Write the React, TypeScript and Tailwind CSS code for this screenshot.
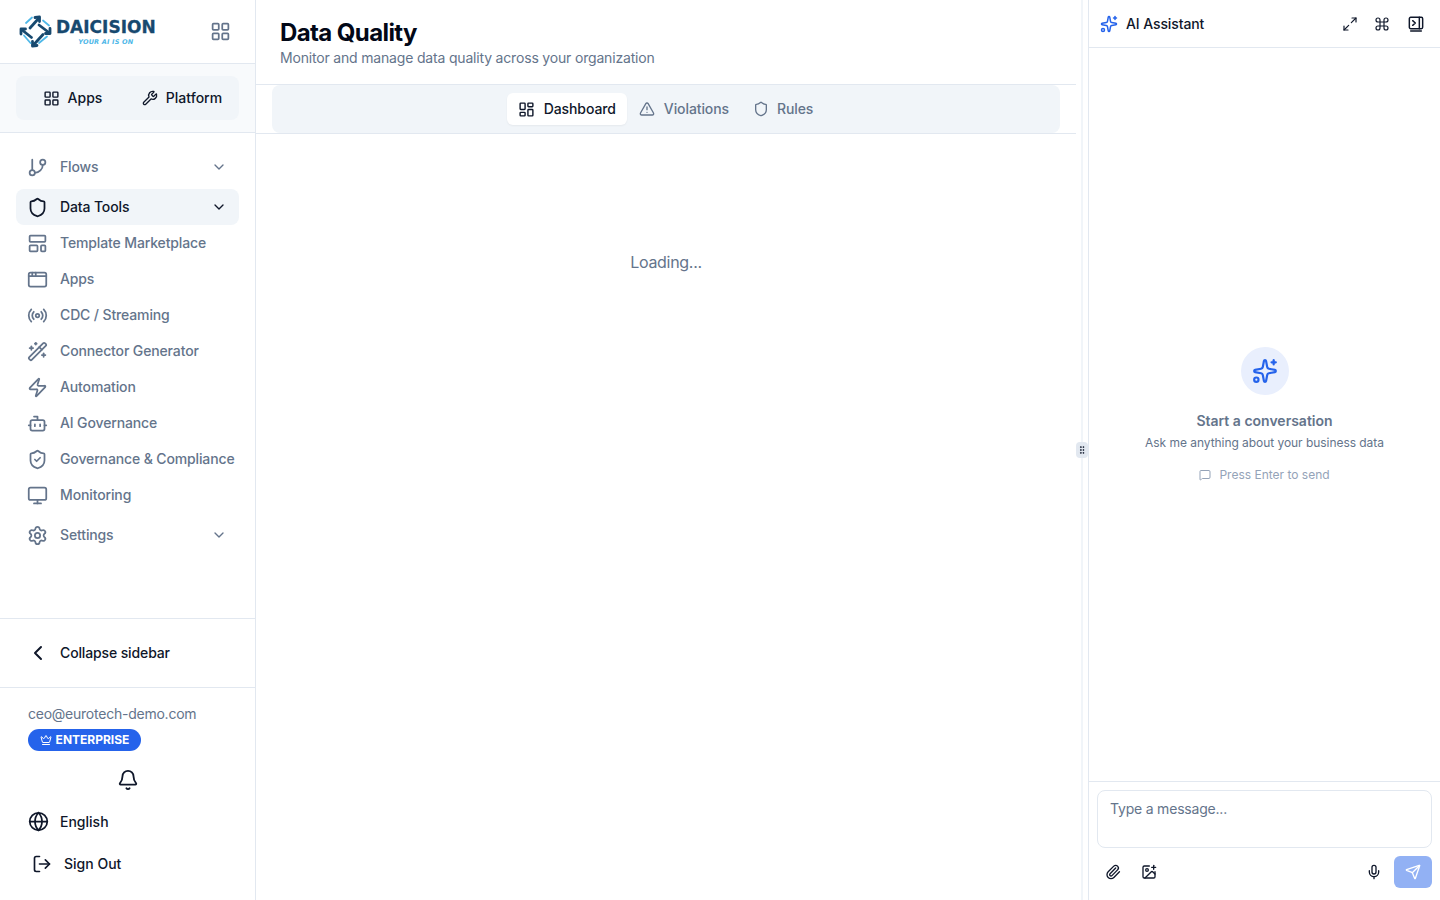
import React from 'react';
import {
  AppWindow,
  Bell,
  Bot,
  ChevronDown,
  ChevronLeft,
  Command,
  Crown,
  GitBranch,
  Globe,
  GripVertical,
  ImagePlus,
  LayoutDashboard,
  LayoutGrid,
  LayoutTemplate,
  LogOut,
  Maximize2,
  MessageSquare,
  Mic,
  Monitor,
  Paperclip,
  Radio,
  Send,
  Settings,
  Shield,
  ShieldCheck,
  Sparkles,
  TriangleAlert,
  WandSparkles,
  Wrench,
  Zap,
} from 'lucide-react';

const navLinks = [
  { label: 'Template Marketplace', icon: LayoutTemplate },
  { label: 'Apps', icon: AppWindow },
  { label: 'CDC / Streaming', icon: Radio },
  { label: 'Connector Generator', icon: WandSparkles },
  { label: 'Automation', icon: Zap },
  { label: 'AI Governance', icon: Bot },
  { label: 'Governance & Compliance', icon: ShieldCheck },
  { label: 'Monitoring', icon: Monitor },
];

// drawn by hand, no package has this mark
const LogoMark = () => (
  <svg width="33" height="33" viewBox="0 0 33 33" fill="none" className="shrink-0">
    <g stroke="#17496f" strokeWidth="2.8" strokeLinecap="round" strokeLinejoin="round">
      <path d="M11 13 L20 3" />
      <path d="M16 2.5 L20.5 2 L20.5 6.5" />
      <path d="M20 10 L30.5 18" />
      <path d="M31 13.5 L31 18.5 L26.5 18.5" />
      <path d="M24 19.5 L14 30.5" />
      <path d="M18 30.5 L13.5 31 L13.5 26.5" />
      <path d="M12.5 22.5 L2.5 14.5" />
      <path d="M2 19 L2 14 L6.5 14" />
    </g>
    <g stroke="#4fb8e8" strokeWidth="1.8" strokeLinecap="round">
      <path d="M7 8 L13 2.5" />
      <path d="M24 5.5 L30 10.5" />
      <path d="M20 28 L28 21.5" />
      <path d="M5 20.5 L11.5 28" />
    </g>
  </svg>
);

// no lucide icon has this shape, panel with a prompt chevron and a base line
const ConsolePanelIcon = () => (
  <svg width="16" height="16" viewBox="0 0 24 24" fill="none" stroke="currentColor" strokeWidth="2.2" strokeLinecap="round" strokeLinejoin="round">
    <rect x="2" y="2" width="20" height="17" rx="2" />
    <path d="M17 2v17" />
    <path d="M7 7l4 3.5L7 14" />
    <path d="M4 22.5h16" />
  </svg>
);

const App: React.FC = () => {
  return (
    <div className="flex h-screen w-full overflow-hidden bg-white font-['Inter',sans-serif] text-[#0f172a]">
      {/* Sidebar */}
      <aside className="flex h-full w-[256px] shrink-0 flex-col border-r border-[#e2e8f0]">
        <div className="flex h-[63px] shrink-0 items-center justify-between pr-[24px] pl-[19px]">
          <div className="flex items-center gap-[4px]">
            <LogoMark />
            <div className="flex flex-col items-center pt-[3px]">
              <span className="font-['DejaVu_Sans',sans-serif] text-[17px] leading-[17px] font-bold text-[#17496f] [-webkit-text-stroke:0.3px_#17496f]">
                DAICISION
              </span>
              <span className="mt-[2px] font-['DejaVu_Sans',sans-serif] text-[6.5px] leading-[9px] font-bold tracking-[0.2px] text-[#4fb8e8] italic">
                YOUR AI IS ON
              </span>
            </div>
          </div>
          <LayoutGrid className="h-[21px] w-[21px] text-[#64748b]" />
        </div>

        <div className="h-[70px] shrink-0 border-y border-[#e2e8f0] bg-[#f8fafc] px-4 pt-[12px]">
          <div className="flex h-[44px] items-center rounded-lg bg-[#f1f5f9] text-sm font-medium">
            <div className="flex w-[113px] items-center justify-center gap-2">
              <LayoutGrid className="h-[17px] w-[17px]" />
              Apps
            </div>
            <div className="flex flex-1 items-center justify-center gap-2 pr-[4px]">
              <Wrench className="h-4 w-4" />
              Platform
            </div>
          </div>
        </div>

        <nav className="flex flex-1 flex-col px-4 pt-4 text-sm font-medium tracking-[-0.13px] text-[#64748b]">
          <div className="flex h-9 shrink-0 items-center justify-between pr-3 pl-[11px]">
            <div className="flex items-center gap-[12px]">
              <GitBranch className="h-[21px] w-[21px]" />
              Flows
            </div>
            <ChevronDown className="h-4 w-4" />
          </div>
          <div className="mt-1 flex h-9 shrink-0 items-center justify-between rounded-lg bg-[#f1f5f9] pr-3 pl-[11px] text-[#0f172a]">
            <div className="flex items-center gap-[12px]">
              <Shield className="h-[21px] w-[21px]" />
              Data Tools
            </div>
            <ChevronDown className="h-4 w-4" />
          </div>
          {navLinks.map((item) => (
            <div key={item.label} className="flex h-9 shrink-0 items-center gap-[12px] pl-[11px] whitespace-nowrap">
              <item.icon className="h-[21px] w-[21px] shrink-0" />
              {item.label}
            </div>
          ))}
          <div className="mt-1 flex h-9 shrink-0 items-center justify-between pr-3 pl-[11px]">
            <div className="flex items-center gap-[12px]">
              <Settings className="h-[21px] w-[21px]" />
              Settings
            </div>
            <ChevronDown className="h-4 w-4" />
          </div>
        </nav>

        <div className="flex h-[70px] shrink-0 items-center gap-[10px] border-y border-[#e2e8f0] pl-[26px] text-sm font-medium tracking-[-0.13px]">
          <ChevronLeft className="h-6 w-6" />
          Collapse sidebar
        </div>

        <div className="h-[212px] shrink-0 px-7 pt-4">
          <p className="text-sm leading-5 tracking-[-0.24px] text-[#64748b]">ceo@eurotech-demo.com</p>
          <div className="mt-[5px] flex h-[22px] w-[113px] items-center justify-center gap-1 rounded-full bg-[#2563eb] text-xs font-bold text-white">
            <Crown className="h-3 w-3" />
            ENTERPRISE
          </div>
          <div className="mt-[18px] flex justify-center">
            <Bell className="h-[22px] w-[22px]" />
          </div>
          <div className="mt-[20px] flex items-center gap-[11px] text-sm font-medium">
            <Globe className="h-[21px] w-[21px]" />
            English
          </div>
          <div className="mt-[22px] flex items-center gap-3 pl-1 text-sm font-medium">
            <LogOut className="h-5 w-5" />
            Sign Out
          </div>
        </div>
      </aside>

      {/* Main */}
      <main className="flex h-full w-[820px] shrink-0 flex-col">
        <header className="h-[85px] shrink-0 border-b border-[#e2e8f0] px-6 pt-[17px]">
          <h1 className="text-2xl leading-8 font-bold tracking-tight text-[#020817]">Data Quality</h1>
          <p className="-mt-[1px] text-sm leading-5 tracking-[-0.18px] text-[#64748b]">Monitor and manage data quality across your organization</p>
        </header>
        <div className="h-[49px] shrink-0 border-b border-[#e2e8f0] px-4">
          <div className="flex h-[48px] items-center justify-center rounded-lg bg-[#f1f5f9] text-sm font-medium tracking-[-0.1px] text-[#64748b]">
            <div className="flex h-8 items-center gap-[9px] rounded-md bg-white px-[11px] text-[#0f172a] shadow-xs">
              <LayoutDashboard className="h-[17px] w-[17px]" />
              Dashboard
            </div>
            <div className="flex h-8 items-center gap-[9px] px-3">
              <TriangleAlert className="h-4 w-4" />
              Violations
            </div>
            <div className="flex h-8 items-center gap-2 px-3">
              <Shield className="h-4 w-4" />
              Rules
            </div>
          </div>
        </div>
        <div className="flex flex-1 justify-center pt-[116px]">
          <p className="text-base leading-6 tracking-[-0.3px] text-[#64748b]">Loading...</p>
        </div>
      </main>

      {/* Resize handle */}
      <div className="relative flex h-full w-[12px] shrink-0 justify-center">
        <div className="h-full w-[2px] bg-[#f1f5f9]" />
        <div className="absolute top-[442px] left-[0px] flex h-4 w-3 items-center justify-center rounded-sm bg-[#e2e8f0]">
          <GripVertical className="h-2.5 w-2.5" />
        </div>
      </div>

      {/* Chat panel */}
      <section className="flex h-full w-[352px] shrink-0 flex-col border-l border-[#e2e8f0]">
        <div className="flex h-[48px] shrink-0 items-center justify-between border-b border-[#e2e8f0] pr-[16px] pl-[11px]">
          <div className="flex items-center gap-2 text-sm font-medium tracking-[-0.1px]">
            <Sparkles className="h-[18px] w-[18px] text-[#2563eb]" />
            AI Assistant
          </div>
          <div className="flex items-center gap-[18px]">
            <div className="flex items-center gap-4">
              <Maximize2 className="h-4 w-4" strokeWidth={1.75} />
              <Command className="h-4 w-4" strokeWidth={1.75} />
            </div>
            <ConsolePanelIcon />
          </div>
        </div>
        <div className="flex flex-1 flex-col items-center justify-center">
          <div className="flex h-12 w-12 items-center justify-center rounded-full bg-[#e9effd]">
            <Sparkles className="h-[26px] w-[26px] text-[#2563eb]" />
          </div>
          <p className="mt-4 text-sm leading-5 font-semibold text-[#64748b]">Start a conversation</p>
          <p className="mt-[2px] text-xs leading-5 tracking-[-0.05px] text-[#64748b]">Ask me anything about your business data</p>
          <div className="mt-[14px] flex items-center gap-2 text-xs leading-4 text-[#94a3b8]">
            <MessageSquare className="h-3 w-3" />
            Press Enter to send
          </div>
        </div>
        <div className="h-[119px] shrink-0 border-t border-[#e2e8f0] px-2 pt-2">
          <div className="h-[58px] rounded-lg border border-[#e2e8f0] px-3 py-2 text-sm leading-5 tracking-[-0.2px] text-[#64748b]">
            Type a message...
          </div>
          <div className="mt-2 flex h-8 items-center justify-between">
            <div className="flex items-center gap-[20px] pl-2">
              <Paperclip className="h-4 w-4" />
              <ImagePlus className="h-4 w-4" />
            </div>
            <div className="flex items-center gap-3">
              <Mic className="h-4 w-4" />
              <div className="flex h-8 w-[38px] items-center justify-center rounded-md bg-[#92b1f4]">
                <Send className="h-4 w-4 text-white" />
              </div>
            </div>
          </div>
        </div>
      </section>
    </div>
  );
};

export default App;
